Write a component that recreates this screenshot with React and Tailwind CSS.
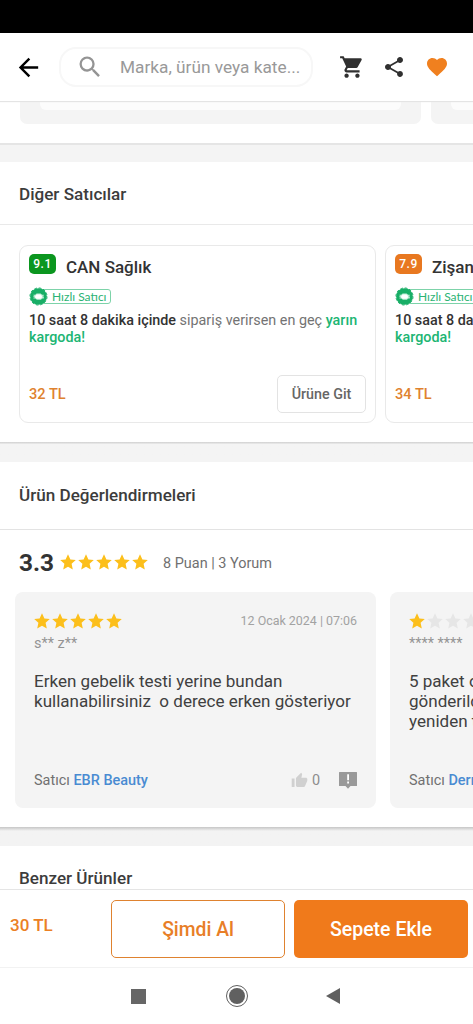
import React from 'react';
import { MdArrowBack, MdSearch, MdShoppingCart, MdShare, MdFavorite, MdThumbUp } from 'react-icons/md';

function Star({ on = true }) {
  return (
    <svg viewBox="0 0 24 24" className={`size-[18px] shrink-0 ${on ? 'text-[#fcbf1b]' : 'text-[#e6e6e6]'}`} fill="currentColor">
      <path d="M12 18.2 18.4 22l-1.6-7.6L22.4 9.300l-7.2-.6L12 1.800 8.800 8.700l-7.200.6 5.600 5.100L5.600 22z" />
    </svg>
  );
}

function Stars({ count }) {
  return (
    <div className="flex">
      {[1, 2, 3, 4, 5].map((n) => (
        <Star key={n} on={n <= count} />
      ))}
    </div>
  );
}

function FastSellerBadge() {
  return (
    <div className="flex h-[19px] items-center">
      <svg viewBox="0 0 20 20" className="z-10 size-[19px] shrink-0">
        <circle cx="10" cy="10" r="8.8" fill="#18ae66" />
        <circle cx="10" cy="10" r="9" fill="none" stroke="#18ae66" strokeWidth="1" strokeDasharray="2.8 1.91" />
        <path d="M4.6 8.2h2L8 6.8h4.2l1.6 1.4h1.8v4h-1.6l-1.5 1.3H8.3l-1.6-1.300H4.6z" fill="#bfeed7" />
        <path d="M6.500 9.400 8.200 7.900h3.800L13.600 9.500v1.600l-1.500 1.300H8L6.500 11z" fill="#fff" />
        <path d="M3.5 9.2h2M3.8 11.2h2M14.5 9.6h2" stroke="#18ae66" strokeWidth=".7" />
      </svg>
      <div className="-ml-2 flex h-[15px] w-[71px] shrink-0 items-center rounded-[3px] border border-[#7dd3a9] pl-[11px] font-['Lato',sans-serif] text-[12px] leading-[13px] whitespace-nowrap text-[#2bb374]">
        Hızlı Satıcı
      </div>
    </div>
  );
}

function SellerCard({ score, scoreClass, name, price }) {
  return (
    <article className="flex h-[178px] w-[357px] shrink-0 flex-col rounded-[9px] border-[1.5px] border-[#e9e9e9] pt-[8px] pr-[9px] pb-[9px] pl-[9px]">
      <div className="flex h-[24px] items-start">
        <span className={`flex h-5 w-[27px] items-center justify-center rounded-[5px] text-[12px] font-medium tracking-[0.5px] text-white ${scoreClass}`}>
          {score}
        </span>
        <h3 className="ml-[10px] pt-[2px] text-[17px] leading-[22px] font-medium text-[#333]">{name}</h3>
      </div>
      <div className="mt-[9px]">
        <FastSellerBadge />
      </div>
      <p className="mt-[6px] text-[14.35px] leading-[17px] text-[#737373]">
        <span className="font-medium text-[#333]">10 saat 8 dakika içinde</span> sipariş verirsen en geç{' '}
        <span className="font-medium text-[#20b573]">yarın kargoda!</span>
      </p>
      <div className="mt-auto flex items-center justify-between">
        <span className="pt-[2px] text-[14.6px] font-medium text-[#df822f]">{price}</span>
        <button className="h-[38px] w-[89px] rounded-[5px] border border-[#e3e3e3] pt-px text-[14.3px] font-medium text-[#666]">Ürüne Git</button>
      </div>
    </article>
  );
}

function ReviewCard({ stars, user, date, seller, children }) {
  return (
    <article className="flex h-[216px] w-[361px] shrink-0 flex-col rounded-[8px] bg-[#f4f4f4] px-[19px] pt-[20px]">
      <div className="flex h-[18px] items-center justify-between">
        <div className="-ml-px">
          <Stars count={stars} />
        </div>
        <span className="text-[12.45px] text-[#a2a2a2]">{date}</span>
      </div>
      <div className="mt-[6px] h-[16px] text-[14.5px] leading-[16px] text-[#949494]">{user}</div>
      <p className="mt-[19px] text-[17.05px] leading-5 whitespace-pre text-[#404040]">{children}</p>
      <div className="mt-auto mb-[17px] flex h-[22px] items-center text-[14.45px] text-[#707070]">
        <span className="pt-px">
          Satıcı <span className="font-medium text-[#498bd2]">{seller}</span>
        </span>
        <MdThumbUp className="ml-auto size-[17px] text-[#d0d0d0]" />
        <span className="ml-1 pt-px text-[#8d8d8d]">0</span>
        <svg viewBox="0 0 18 17" className="ml-[19px] h-[17px] w-[18px]">
          <path d="M.5 0h17q.5 0 .5.5v13q0 .5-.5.5h-6L9 16.800 6.500 14h-6q-.5 0-.5-.5V.5Q0 0 .5 0z" fill="#999" />
          <path d="M8.200 2.200h1.800v6H8.200zM8.200 9.500h1.800v2H8.200z" fill="#fff" />
        </svg>
      </div>
    </article>
  );
}

function SectionTitle({ children, className = '' }) {
  return <h2 className={`flex shrink-0 items-center pl-[19px] text-[17.1px] font-medium text-[#3c3c3c] ${className}`}>{children}</h2>;
}

export default function App() {
  return (
    <div className="flex h-[1024px] w-[473px] flex-col overflow-hidden bg-white font-['Roboto',sans-serif]">
      <div className="h-[33px] shrink-0 bg-black" />
      <header className="z-10 flex h-[68px] shrink-0 items-center bg-white pl-[14px] shadow-[0_1px_1px_#e4e4e4]">
        <MdArrowBack className="size-[29px] shrink-0 text-black" />
        <div className="ml-[16px] flex h-[40px] w-[254px] shrink-0 items-center rounded-[17px] border-2 border-[#f7f7f7] pl-[15px]">
          <MdSearch className="size-[28px] shrink-0 text-[#949494]" />
          <span className="ml-[16px] pt-[2px] text-[17.25px] whitespace-nowrap text-[#999]">Marka, ürün veya kate...</span>
        </div>
        <MdShoppingCart className="ml-[26px] size-[26px] shrink-0 text-[#303030]" />
        <MdShare className="ml-[17px] size-[24px] shrink-0 text-[#303030]" />
        <MdFavorite className="ml-[19px] size-[24px] shrink-0 text-[#f0801f]" />
      </header>

      <main className="flex min-h-0 grow flex-col overflow-hidden">
        <section className="flex h-[42px] shrink-0 gap-[10px] bg-white pl-[20px]">
          <div className="h-[23px] w-[401px] shrink-0 rounded-b-[7px] bg-[#f4f4f4] px-[20px]">
            <div className="h-[9px] rounded-b-[6px] bg-[#fcfcfc]" />
          </div>
          <div className="h-[23px] w-[401px] shrink-0 rounded-b-[7px] bg-[#f4f4f4] pl-[20px]">
            <div className="h-[9px] rounded-b-[6px] bg-[#fcfcfc]" />
          </div>
        </section>
        <div className="h-[19px] shrink-0 border-t-2 border-[#e5e5e5] bg-[#f4f4f4]" />

        <section className="flex h-[280px] shrink-0 flex-col bg-white">
          <SectionTitle className="h-[63px] border-b border-[#e9e9e9] pt-[3px]">Diğer Satıcılar</SectionTitle>
          <div className="flex gap-[9px] pt-[20px] pl-[19px]">
            <SellerCard score="9.1" scoreClass="bg-[#0b961f]" name="CAN Sağlık" price="32 TL" />
            <SellerCard score="7.9" scoreClass="bg-[#e87820]" name="Zişan" price="34 TL" />
          </div>
        </section>
        <div className="h-[20px] shrink-0 bg-[#f4f4f4] bg-linear-to-b from-[#cfcfcf] to-[#f4f4f4] to-[2.5px]" />

        <section className="flex h-[365px] shrink-0 flex-col bg-white">
          <SectionTitle className="h-[68px] border-b border-[#e3e3e3]">Ürün Değerlendirmeleri</SectionTitle>
          <div className="flex h-[62px] items-center pl-[19px]">
            <span className="pt-[4px] text-[24.4px] leading-[28px] font-bold text-[#333]">3.3</span>
            <div className="ml-[5px] pt-[2px]">
              <Stars count={5} />
            </div>
            <span className="ml-[14px] pt-[5px] text-[14.45px] text-[#707070]">8 Puan | 3 Yorum</span>
          </div>
          <div className="flex gap-[14px] pl-[15px]">
            <ReviewCard stars={5} user="s** z**" date="12 Ocak 2024 | 07:06" seller="EBR Beauty">
              {'Erken gebelik testi yerine bundan\nkullanabilirsiniz  o derece erken gösteriyor'}
            </ReviewCard>
            <ReviewCard stars={1} user="**** ****" date="" seller="Derm">
              {'5 paket o\ngönderild\nyeniden t'}
            </ReviewCard>
          </div>
        </section>
        <div className="h-[19px] shrink-0 bg-linear-to-b from-[#c6c6c6] to-[#f3f3f3] to-[4px]" />
        <SectionTitle className="h-[64px] bg-white pt-[2px]">Benzer Ürünler</SectionTitle>
      </main>

      <footer className="flex h-[79px] shrink-0 items-start border-t border-b border-t-[#e5e5e5] border-b-[#f2f2f2] bg-white pt-[10px] pl-[10px]">
        <span className="w-[101px] pt-[15px] text-[17px] leading-5 font-medium text-[#eb8024]">30 TL</span>
        <button className="h-[58px] w-[174px] rounded-[5px] border border-[#df822f] pt-[2px] text-[19.3px] font-medium text-[#e87e27]">Şimdi Al</button>
        <button className="ml-[9px] h-[58px] w-[174px] rounded-[5px] bg-[#f07a1b] pt-[2px] text-[19.5px] font-medium text-white">Sepete Ekle</button>
      </footer>
      <nav className="flex h-[56px] shrink-0 items-center bg-white pl-[131px]">
        <span className="size-[15px] bg-[#666]" />
        <span className="ml-[80px] flex size-[22px] items-center justify-center rounded-full border-[1.5px] border-[#606060]">
          <span className="size-[16px] rounded-full bg-[#606060]" />
        </span>
        <svg viewBox="0 0 14 16" className="ml-[78px] h-[16px] w-[14px]">
          <path d="M14 0v16L0 8z" fill="#606060" />
        </svg>
      </nav>
    </div>
  );
}
